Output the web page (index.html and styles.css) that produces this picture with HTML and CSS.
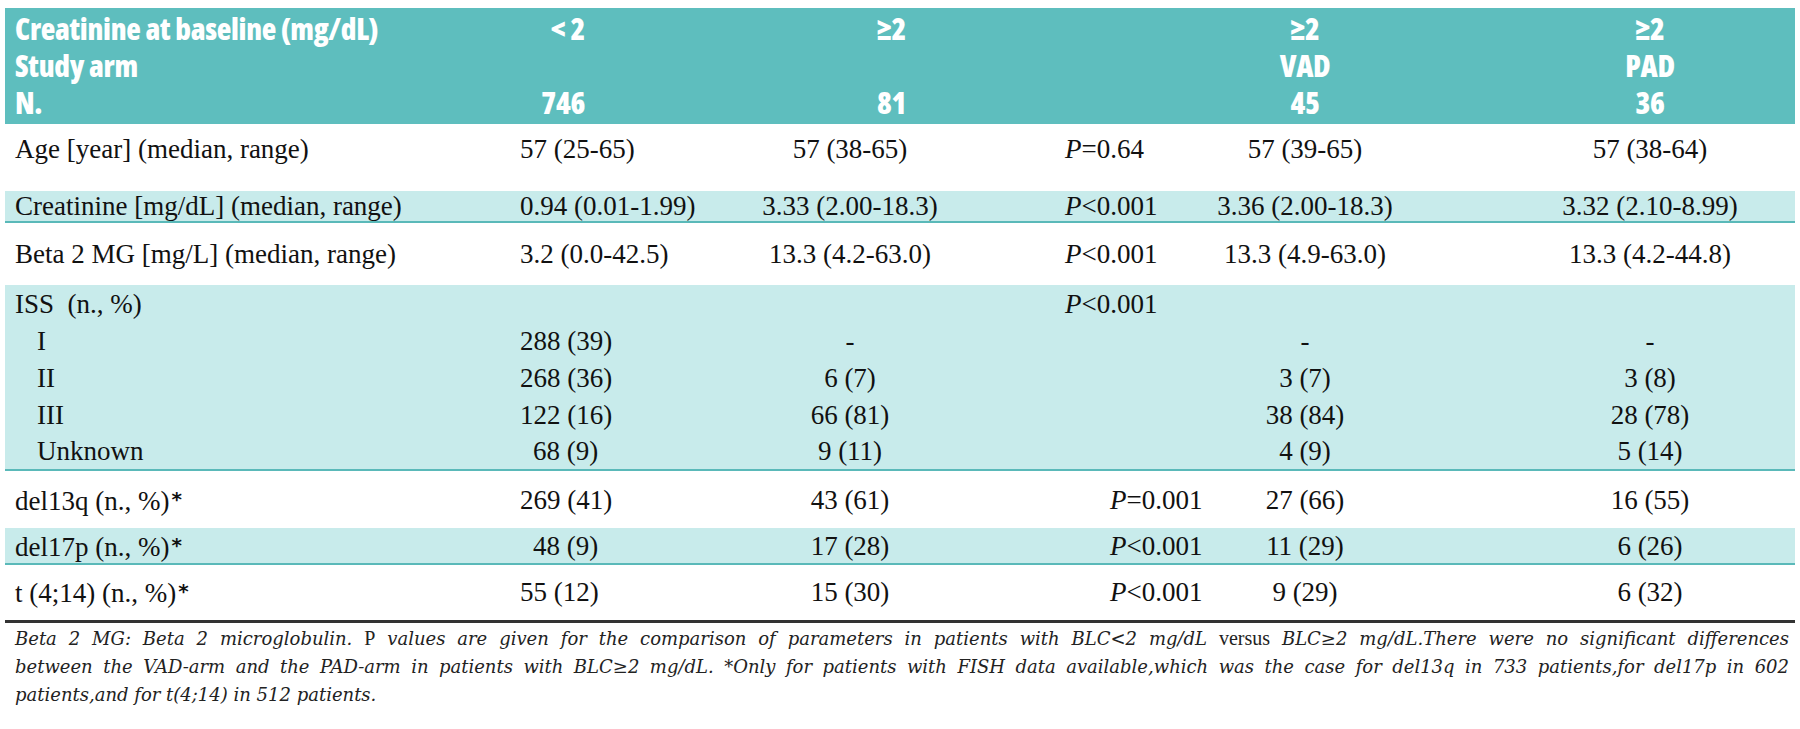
FILE: index.html
```html
<!DOCTYPE html>
<html>
<head>
<meta charset="utf-8">
<link rel="stylesheet" href="styles.css">
</head>
<body>
<div class="page">
<table class="tbl">
<colgroup>
<col class="c0"><col class="c1"><col class="c2"><col class="c3"><col class="c4"><col class="c5">
</colgroup>
<thead>
<tr class="hr hr1"><th class="hl">Creatinine at baseline (mg/dL)</th><th class="h1">&lt; 2</th><th class="h2">≥2</th><th></th><th class="hc">≥2</th><th class="hc h5">≥2</th></tr>
<tr class="hr"><th class="hl">Study arm</th><th></th><th></th><th></th><th class="hc">VAD</th><th class="hc h5">PAD</th></tr>
<tr class="hr hr3"><th class="hl">N.</th><th class="h1">746</th><th class="h2">81</th><th></th><th class="hc">45</th><th class="hc h5">36</th></tr>
</thead>
<tbody>
<tr class="r-age"><td class="lab">Age [year] (median, range)</td><td class="v1">57 (25-65)</td><td class="v2">57 (38-65)</td><td class="p"><i>P</i>=0.64</td><td class="v4">57 (39-65)</td><td class="v5">57 (38-64)</td></tr>
<tr class="r-cre band edge"><td class="lab">Creatinine [mg/dL] (median, range)</td><td class="v1">0.94 (0.01-1.99)</td><td class="v2">3.33 (2.00-18.3)</td><td class="p"><i>P</i>&lt;0.001</td><td class="v4">3.36 (2.00-18.3)</td><td class="v5">3.32 (2.10-8.99)</td></tr>
<tr class="r-beta"><td class="lab">Beta 2 MG [mg/L] (median, range)</td><td class="v1">3.2 (0.0-42.5)</td><td class="v2">13.3 (4.2-63.0)</td><td class="p"><i>P</i>&lt;0.001</td><td class="v4">13.3 (4.9-63.0)</td><td class="v5">13.3 (4.2-44.8)</td></tr>
<tr class="r-sub band"><td class="lab">ISS&nbsp; (n., %)</td><td class="v1"></td><td class="v2"></td><td class="p"><i>P</i>&lt;0.001</td><td class="v4"></td><td class="v5"></td></tr>
<tr class="r-sub band"><td class="lab sub">I</td><td class="v1">288 (39)</td><td class="v2">-</td><td class="p"></td><td class="v4">-</td><td class="v5">-</td></tr>
<tr class="r-sub band"><td class="lab sub">II</td><td class="v1">268 (36)</td><td class="v2">6 (7)</td><td class="p"></td><td class="v4">3 (7)</td><td class="v5">3 (8)</td></tr>
<tr class="r-sub band"><td class="lab sub">III</td><td class="v1">122 (16)</td><td class="v2">66 (81)</td><td class="p"></td><td class="v4">38 (84)</td><td class="v5">28 (78)</td></tr>
<tr class="r-sub band edge"><td class="lab sub">Unknown</td><td class="v1 fig">68 (9)</td><td class="v2">9 (11)</td><td class="p"></td><td class="v4">4 (9)</td><td class="v5">5 (14)</td></tr>
<tr class="r-del"><td class="lab">del13q (n., %)<span class="ast">*</span></td><td class="v1">269 (41)</td><td class="v2">43 (61)</td><td class="p p2"><i>P</i>=0.001</td><td class="v4">27 (66)</td><td class="v5">16 (55)</td></tr>
<tr class="r-d17 band edge"><td class="lab">del17p (n., %)<span class="ast">*</span></td><td class="v1 fig">48 (9)</td><td class="v2">17 (28)</td><td class="p p2"><i>P</i>&lt;0.001</td><td class="v4">11 (29)</td><td class="v5">6 (26)</td></tr>
<tr class="r-t last"><td class="lab">t (4;14) (n., %)<span class="ast">*</span></td><td class="v1">55 (12)</td><td class="v2">15 (30)</td><td class="p p2"><i>P</i>&lt;0.001</td><td class="v4">9 (29)</td><td class="v5">6 (32)</td></tr>
</tbody>
</table>
<p class="note">
<span class="ln">Beta 2 MG: Beta 2 microglobulin. <span class="up">P</span> values are given for the comparison of parameters in patients with BLC&lt;2 mg/dL <span class="up">versus</span> BLC≥2 mg/dL.There were no significant differences</span>
<span class="ln">between the VAD-arm and the PAD-arm in patients with BLC≥2 mg/dL. *Only for patients with FISH data available,which was the case for del13q in 733 patients,for del17p in 602</span>
<span class="ln end">patients,and for t(4;14) in 512 patients.</span>
</p>
</div>
</body>
</html>
```

FILE: styles.css
```css
html, body {
  margin: 0;
  padding: 0;
  background: #ffffff;
}

.page {
  padding: 8px 5px 0 5px;
  width: 1790px;
}

.tbl {
  width: 1790px;
  border-collapse: collapse;
  table-layout: fixed;
}

.c0 { width: 495px; }
.c1 { width: 220px; }
.c2 { width: 260px; }
.c3 { width: 200px; }
.c4 { width: 250px; }
.c5 { width: 365px; }

/* header */
.hr th {
  background: #5ebebe;
  color: #ffffff;
  font-family: "Liberation Sans Narrow", "Open Sans", sans-serif;
  font-stretch: 75%;
  font-weight: 800;
  font-size: 30px;
  line-height: 37px;
  height: 37px;
  padding: 0;
  white-space: nowrap;
  letter-spacing: -0.3px;
}
.hr1 th { padding-top: 2px; }
.hr3 th { padding-bottom: 3px; }

.hl { text-align: left; padding-left: 10px !important; }
.h1 { text-align: right; padding-right: 135px !important; }
.h2 { text-align: right; padding-right: 74px !important; }
.hc { text-align: center; }
.h5 { padding-left: 75px !important; }

/* body */
.tbl td {
  font-family: "Liberation Serif", "Times New Roman", serif;
  font-size: 27px;
  line-height: 30px;
  color: #111111;
  padding: 0;
  white-space: nowrap;
  vertical-align: middle;
}

.band td { background: #c8ebeb; }
.edge td { border-bottom: 2px solid #5ab9b9; }
.last td { border-bottom: 3px solid #333333; }

.lab { padding-left: 10px !important; text-align: left; }
.sub { padding-left: 32px !important; }
.v1 { padding-left: 20px !important; text-align: left; }
.fig { padding-left: 33px !important; }
.v2 { text-align: center; }
.p { padding-left: 85px !important; text-align: left; }
.p2 { padding-left: 130px !important; }
.v4 { text-align: center; }
.v5 { text-align: center; padding-left: 75px !important; }

.ast { font-family: "DejaVu Sans", sans-serif; font-size: 20px; font-weight: 700; vertical-align: 4px; margin-left: 2px; }

.r-age { height: 67px; }
.r-age td { vertical-align: top; padding-top: 10px; }
.r-cre { height: 31px; }
.r-beta { height: 63px; }
.r-sub { height: 37px; }
.r-del { height: 58px; }
.r-d17 { height: 36px; }
.r-t { height: 57px; }

/* footnote */
.note {
  margin: 0;
  padding: 1px 6px 0 10px;
  font-family: "DejaVu Serif", serif;
  font-style: italic;
  font-size: 18px;
  line-height: 28px;
  color: #222222;
}
.ln {
  display: block;
  text-align: justify;
  text-align-last: justify;
}
.ln.end { text-align-last: left; }
.up { font-style: normal; font-family: "Liberation Serif", serif; font-size: 20px; }
```
